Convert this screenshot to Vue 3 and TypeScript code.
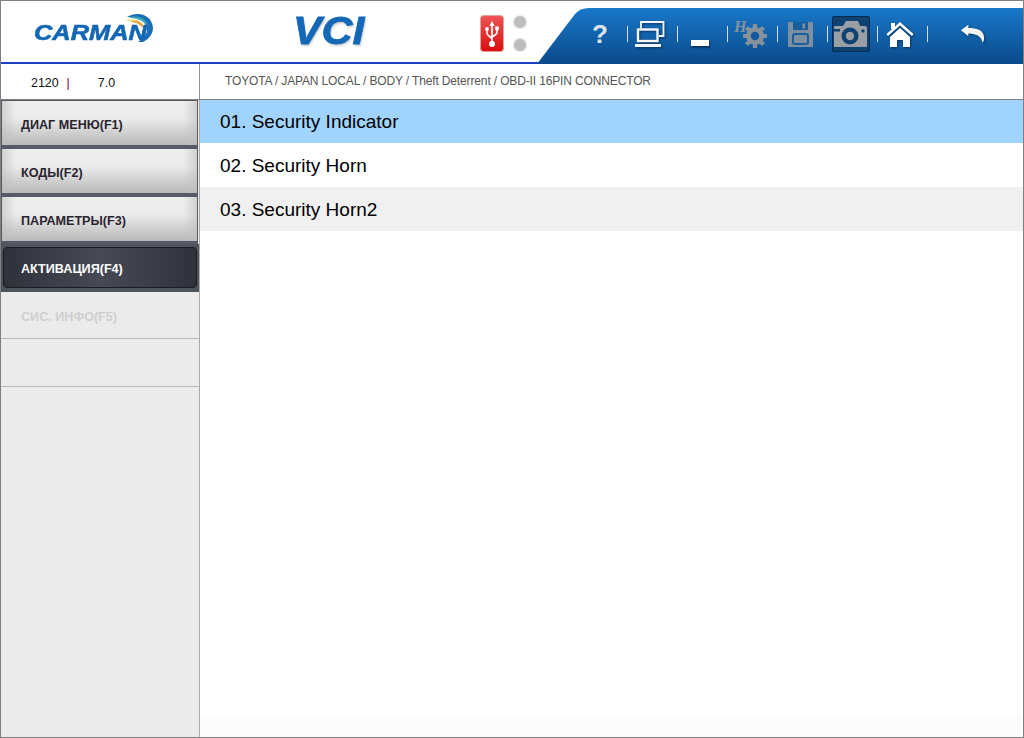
<script setup lang="ts">
const menu = [
  { label: "ДИАГ МЕНЮ(F1)", state: "normal" },
  { label: "КОДЫ(F2)", state: "normal" },
  { label: "ПАРАМЕТРЫ(F3)", state: "normal" },
  { label: "АКТИВАЦИЯ(F4)", state: "active" },
  { label: "СИС. ИНФО(F5)", state: "disabled" },
  { label: "", state: "disabled" },
];

const rows = [
  { label: "01. Security Indicator", tone: "selected" },
  { label: "02. Security Horn", tone: "plain" },
  { label: "03. Security Horn2", tone: "alt" },
];
</script>

<template>
  <div class="app">
    <header class="top">
      <div class="logo">
        <svg class="swoosh" width="40" height="34" viewBox="0 0 40 34">
          <path d="M10 6C20 0 35 3 36 17C36 23 32 28 26 31L21 31C27 27 31 22 30 17C28 9 20 6 10 6Z" fill="#1a6fb8" />
          <path d="M12 6.500C20 3 31 8 32 17C30 12 24 8 12 6.500Z" fill="#3aa8b8" />
          <path d="M13 9C21 8 28 12 29 23C27 16 22 12 15 11Z" fill="#e2a440" />
          <path d="M7 9.500C11 8 16 8 21 10.500C16 9.500 12 9.500 7 9.500Z" fill="#f2e25a" />
        </svg>
        <span class="logo-text">CARMAN</span>
      </div>
      <div class="vci">VCI</div>
      <div class="status">
        <svg class="usb" width="24" height="37" viewBox="0 0 24 37">
          <defs>
            <linearGradient id="usbRed" x1="0" y1="0" x2="0" y2="1">
              <stop offset="0" stop-color="#ee5656" />
              <stop offset="1" stop-color="#d80c0c" />
            </linearGradient>
          </defs>
          <rect x="0.500" y="0.500" width="23" height="36" rx="3" fill="url(#usbRed)" stroke="#eba0a0" />
          <path d="M12 6L14.600 11H9.400Z" fill="#fff" />
          <path d="M12 10V28M7 15V18Q7 20 9 21L12 23.500M17 14V17Q17 19 15 20L12 22" fill="none" stroke="#fff" stroke-width="1.700" />
          <circle cx="12" cy="29" r="3" fill="#fff" />
          <circle cx="7" cy="14" r="1.900" fill="#fff" />
          <rect x="15.200" y="11.500" width="3.600" height="3.600" fill="#fff" />
        </svg>
        <div class="leds">
          <span class="led"></span>
          <span class="led"></span>
        </div>
      </div>
      <nav class="toolbar">
        <div class="tool"><span class="qmark">?</span></div>
        <div class="tool">
          <svg class="lifted" width="30" height="27" viewBox="0 0 30 27" fill="none" stroke="#f4f7fa">
            <path d="M6 7.500V1H28.500V15H24" stroke-width="1.800" />
            <rect x="3" y="8.500" width="19.500" height="11.500" stroke-width="2.400" />
            <path d="M0 24.500H26" stroke-width="3" />
          </svg>
        </div>
        <div class="tool"><span class="minus"></span></div>
        <div class="tool">
          <svg width="36" height="30" viewBox="0 0 36 30">
            <circle cx="23" cy="17" r="9" fill="#86919c" />
            <path d="M23 5V29M11 17H35M14.500 8.500L31.500 25.500M31.500 8.500L14.500 25.500" stroke="#86919c" stroke-width="4.200" />
            <circle cx="23" cy="17" r="4.200" fill="#14599c" />
            <text x="2" y="13" class="gear-h">H</text>
          </svg>
        </div>
        <div class="tool">
          <svg width="25" height="25" viewBox="0 0 25 25">
            <path d="M1 0H24Q25 0 25 1V25H0V1Q0 0 1 0Z" fill="#7e8fa0" />
            <rect x="5" y="0" width="15" height="8" fill="#1a5d9e" />
            <rect x="14.500" y="1.500" width="2.500" height="5" fill="#7e8fa0" />
            <rect x="5" y="12" width="15" height="10" rx="2" fill="#7e8fa0" stroke="#1a5d9e" stroke-width="2" />
          </svg>
        </div>
        <div class="tool">
          <span class="cam-box">
            <svg width="33" height="26" viewBox="0 0 33 26">
              <path d="M1 5H9L12 0H24L26 5H31Q33 5 33 7V26H0V6Q0 5 1 5Z" fill="#9a9fa3" />
              <circle cx="16" cy="15" r="8.500" fill="#0d4272" />
              <circle cx="16" cy="15" r="4.200" fill="#9a9fa3" />
              <rect x="0" y="8" width="6" height="2.500" fill="#0d4272" />
              <circle cx="29" cy="10" r="1.700" fill="#0d4272" />
            </svg>
          </span>
        </div>
        <div class="tool">
          <svg class="lifted" width="28" height="27" viewBox="0 0 28 27">
            <path d="M0.500 13L14 1L27.500 13L26 15L14 4.500L2 15Z" fill="#fff" />
            <rect x="5" y="2" width="4" height="6" fill="#fff" />
            <path d="M4 16L14 7L24 16V26H17V19H11V26H4Z" fill="#fff" />
          </svg>
        </div>
        <div class="tool tool-last">
          <svg class="lifted" width="26" height="20" viewBox="0 0 28 21">
            <path d="M1 6.500L9 0.500V4C18 4 26 6 26 15C26 17 25 19 24 20C24 14 18 10 9 10V13Z" fill="#f4f4f0" />
          </svg>
        </div>
      </nav>
    </header>

    <div class="info">
      <div class="version">
        <span class="ver-a">2120</span>
        <span class="ver-sep">|</span>
        <span class="ver-b">7.0</span>
      </div>
      <div class="crumbs">TOYOTA / JAPAN LOCAL / BODY / Theft Deterrent / OBD-II 16PIN CONNECTOR</div>
    </div>

    <div class="main">
      <aside class="side">
        <div v-for="item in menu" :key="item.label" class="item" :class="item.state">
          <span class="item-inner">{{ item.label }}</span>
        </div>
      </aside>
      <section class="list">
        <div class="rows">
          <div v-for="row in rows" :key="row.label" class="row" :class="row.tone">{{ row.label }}</div>
        </div>
        <div class="foot"></div>
      </section>
    </div>
  </div>
</template>

<style>
html,
body {
  margin: 0;
  background: #fff;
}
</style>

<style scoped>
.app {
  width: 1024px;
  height: 738px;
  box-sizing: border-box;
  border: 1px solid #808080;
  display: flex;
  flex-direction: column;
  font-family: "Liberation Sans", Arial, sans-serif;
  overflow: hidden;
  background: #fff;
}

.top {
  height: 63px;
  flex: none;
  display: flex;
  position: relative;
  background: linear-gradient(#fff 61px, #1a3fc0 61px);
}

.logo {
  width: 205px;
  flex: none;
  position: relative;
}

.logo-text {
  position: absolute;
  left: 33px;
  top: 20px;
  font-size: 22.5px;
  line-height: 24px;
  font-weight: 700;
  font-style: italic;
  color: #1467b4;
  -webkit-text-stroke: 0.6px #1467b4;
  transform: scaleX(1.13);
  transform-origin: left;
}

.swoosh {
  position: absolute;
  left: 116px;
  top: 10px;
}

.vci {
  width: 100px;
  margin-left: 87px;
  padding-top: 7px;
  font-size: 39px;
  line-height: 46px;
  font-weight: 700;
  font-style: italic;
  color: #1568b8;
  -webkit-text-stroke: 0.8px #1568b8;
  text-shadow: 1px 2px 2px #ccc;
  transform: scaleX(1.1);
  transform-origin: left;
}

.status {
  display: flex;
  gap: 10px;
  margin-left: 87px;
  padding-top: 14px;
}

.usb {
  display: block;
}

.leds {
  display: flex;
  flex-direction: column;
  gap: 11px;
  padding-top: 1px;
}

.led {
  width: 12px;
  height: 12px;
  border-radius: 50%;
  background: #bdbdbd;
  box-shadow: 0 0 2px 1px #e2e2e2;
}

.toolbar {
  position: absolute;
  right: 0;
  top: 7px;
  width: 486px;
  height: 56px;
  box-sizing: border-box;
  padding: 0 0 4px 41px;
  display: flex;
  align-items: center;
  background: linear-gradient(#1878c9, #0b4a8a);
  clip-path: path("M0 56L38 6Q43 0 52 0H486V56Z");
}

.tool {
  width: 50px;
  height: 42px;
  flex: none;
  box-sizing: border-box;
  padding-right: 6px;
  display: flex;
  align-items: center;
  justify-content: center;
  position: relative;
}

.tool::after {
  content: "";
  position: absolute;
  right: 0;
  top: 13px;
  width: 1px;
  height: 16px;
  background: #d8dde4;
}

.tool-last {
  width: 90px;
  padding-right: 0;
}

.tool-last::after {
  display: none;
}

.lifted {
  filter: drop-shadow(1px 1px 1px rgba(4, 30, 60, 0.7));
}

.qmark {
  font-size: 26px;
  font-weight: 700;
  color: #dde5ea;
}

.minus {
  width: 18px;
  height: 6px;
  margin-top: 18px;
  background: #fff;
  box-shadow: 1px 2px 2px #0a3560;
}

.gear-h {
  font-family: "Liberation Serif", serif;
  font-size: 16px;
  font-style: italic;
  font-weight: 700;
  fill: #86919c;
}

.cam-box {
  width: 38px;
  height: 36px;
  box-sizing: border-box;
  display: flex;
  align-items: center;
  justify-content: center;
  margin-left: 1px;
  background: #0d4272;
  border: 1px solid #07294d;
  border-radius: 2px;
}

.info {
  height: 35px;
  flex: none;
  display: flex;
  border-bottom: 1px solid #808080;
}

.version {
  width: 199px;
  flex: none;
  box-sizing: border-box;
  border-right: 1px solid #909090;
  display: flex;
  align-items: center;
  padding: 2px 0 0 30px;
  font-size: 12.4px;
  color: #111;
}

.ver-sep {
  margin-left: 8px;
  color: #800040;
}

.ver-b {
  margin-left: 28px;
}

.crumbs {
  padding: 0 0 1px 25px;
  display: flex;
  align-items: center;
  font-size: 12px;
  letter-spacing: -0.14px;
  color: #555;
}

.main {
  flex: 1;
  display: flex;
  min-height: 0;
}

.side {
  width: 199px;
  flex: none;
  box-sizing: border-box;
  background: #ebebeb;
  border-right: 1px solid #aaa;
}

.item {
  height: 48px;
  box-sizing: border-box;
  font-size: 12.6px;
  font-weight: 700;
}

.item-inner {
  height: 100%;
  box-sizing: border-box;
  display: flex;
  align-items: center;
  padding-left: 19px;
}

.normal {
  padding: 1px 2px 3px 1px;
  background: linear-gradient(90deg, #555b66 197px, #ebebeb 197px);
}

.normal .item-inner {
  padding-top: 4px;
  color: #2a2430;
  background:
    linear-gradient(90deg, rgba(190, 190, 190, 0.6), transparent 14px, transparent calc(100% - 14px), rgba(190, 190, 190, 0.6)),
    linear-gradient(#efefef 0, #ebebeb 40%, #b8b8b8 100%);
}

.active {
  padding: 3px 2px 4px 2px;
  background: #4f535c;
}

.active .item-inner {
  padding-top: 2px;
  color: #fff;
  border: 1px solid #1b1d24;
  border-radius: 4px;
  padding-left: 17px;
  background: linear-gradient(90deg, #2f313b, #474a54 50%, #2f313b);
}

.disabled {
  color: #cfcfcf;
  border-bottom: 1px solid #b8b8b8;
}

.active + .disabled {
  height: 47px;
}

.disabled .item-inner {
  padding-top: 4px;
  padding-left: 20px;
}

.list {
  flex: 1;
  display: flex;
  flex-direction: column;
  justify-content: space-between;
  background: #fff;
}

.row {
  height: 44px;
  box-sizing: border-box;
  padding: 2px 0 0 20px;
  display: flex;
  align-items: center;
  font-size: 19px;
  color: #000;
}

.selected {
  height: 43px;
  padding-top: 0;
  background: #a0d4fe;
}

.alt {
  background: #f0f0f0;
}

.foot {
  height: 22px;
  background: #fcfcfc;
}
</style>
